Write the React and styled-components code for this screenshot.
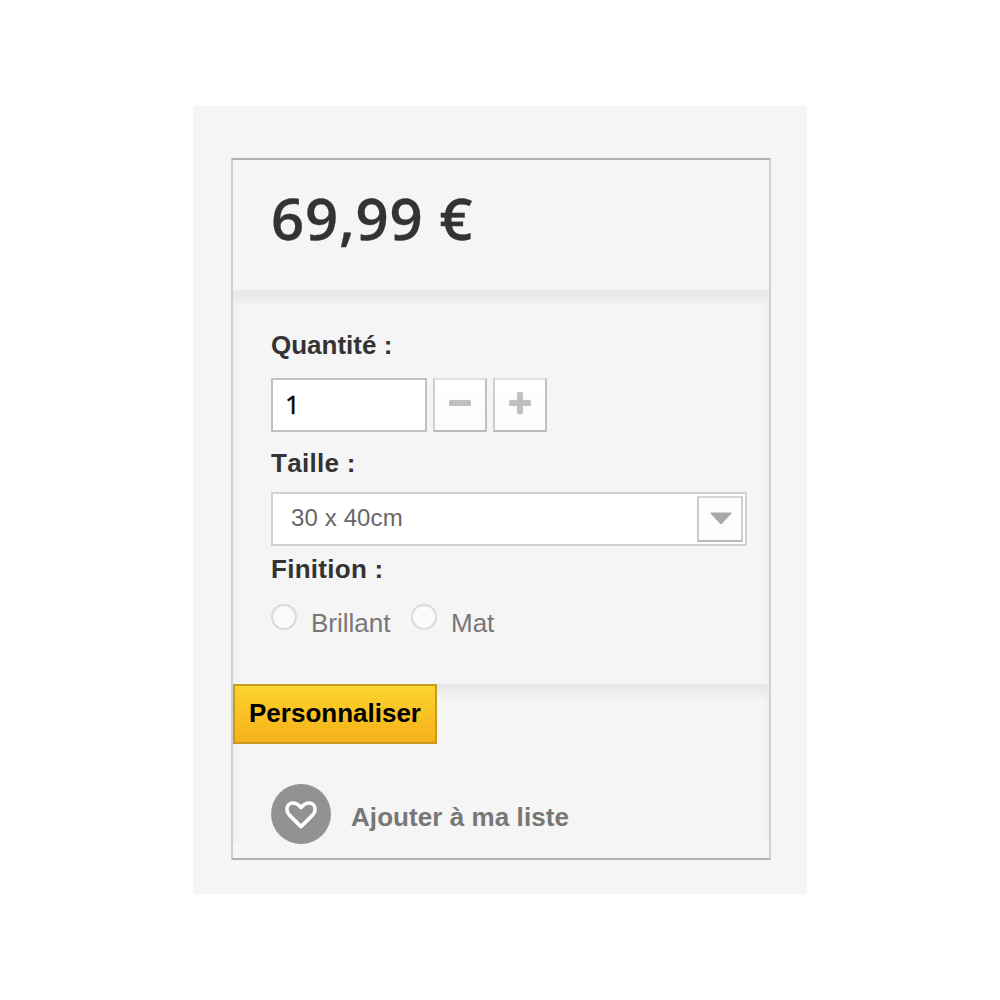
import React, { useState } from 'react'
import styled, { createGlobalStyle } from 'styled-components'

function App() {

    const [quantity, setQuantity] = useState(1);
    const [finish, setFinish] = useState('');

    return (
        <>
            <GlobalStyle />
            <Page>
                <Card>
                    <PriceBox>69,99 €</PriceBox>
                    <Options>
                        <Label>Quantité :</Label>
                        <QuantityRow>
                            <QuantityInput
                                type="text"
                                value={quantity}
                                onChange={(e) => setQuantity(Number(e.target.value) || 1)}
                            />
                            <StepButton aria-label="Moins" onClick={() => setQuantity(Math.max(1, quantity - 1))}>
                                <svg width="24" height="24" viewBox="0 0 24 24">
                                    <rect x="1" y="9" width="22" height="6" rx="1.5" fill="#c0c0c0" />
                                </svg>
                            </StepButton>
                            <StepButton aria-label="Plus" onClick={() => setQuantity(quantity + 1)}>
                                <svg width="24" height="24" viewBox="0 0 24 24">
                                    <rect x="1" y="9" width="22" height="6" rx="1.5" fill="#c0c0c0" />
                                    <rect x="9" y="1" width="6" height="22" rx="1.5" fill="#c0c0c0" />
                                </svg>
                            </StepButton>
                        </QuantityRow>
                        <Label $spacing="0.3px">Taille :</Label>
                        <Select>
                            <span>30 x 40cm</span>
                            <Arrow>
                                <svg width="22" height="13" viewBox="0 0 22 13">
                                    <path d="M1 .5h20q1 .3.3 1.2L12 11.8q-1 .9-2 0L.7 1.7Q0 .8 1 .5z" fill="#a9a9a9" />
                                </svg>
                            </Arrow>
                        </Select>
                        <Label $spacing="0.28px">Finition :</Label>
                        <RadioRow>
                            {['Brillant', 'Mat'].map((name) => (
                                <RadioLabel key={name} onClick={() => setFinish(name)}>
                                    <Radio $checked={finish === name} />
                                    <span>{name}</span>
                                </RadioLabel>
                            ))}
                        </RadioRow>
                    </Options>
                    <Actions>
                        <CustomizeButton>Personnaliser</CustomizeButton>
                        <Wishlist>
                            <HeartCircle>
                                <svg width="34" height="30" viewBox="0 0 34 30">
                                    <path
                                        d="M17 27.600 5.400 16.100C3.400 14 2.900 12.500 2.900 10.300 2.900 6.300 5.400 4 9 4c3.300 0 5.600 1.800 8 4.500C19.400 5.800 21.700 4 25 4c3.600 0 6.100 2.300 6.100 6.300 0 2.200-.5 3.700-2.500 5.800z"
                                        fill="none"
                                        stroke="#fff"
                                        strokeWidth="3.6"
                                        strokeLinejoin="round"
                                    />
                                </svg>
                            </HeartCircle>
                            <span>Ajouter à ma liste</span>
                        </Wishlist>
                    </Actions>
                </Card>
            </Page>
        </>
    )
}

const GlobalStyle = createGlobalStyle`
    * {
        box-sizing: border-box;
    }

    body {
        margin: 0;
        background: #fff;
        font-family: "Liberation Sans", Arial, sans-serif;
    }
`;

const Page = styled.div`
    width: 614px;
    height: 788px;
    margin: 106px auto 0;
    padding: 52px 36px 34px 38px;
    background: #f5f5f5;
`;

const Card = styled.div`
    width: 540px;
    height: 702px;
    border: 2px solid;
    border-color: #b0b0b0 #d0d0d0;
`;

const PriceBox = styled.div`
    height: 130px;
    padding: 18px 0 0 38px;
    font: 600 58px/80px "Open Sans", sans-serif;
    letter-spacing: 0.8px;
    color: #333;
    -webkit-text-stroke: 0.3px #333;
`;

const Options = styled.div`
    height: 394px;
    padding: 38px 22px 0 38px;
    box-shadow: inset 0 10px 10px rgba(0, 0, 0, 0.05);
`;

const Label = styled.div`
    height: 34px;
    font-size: 26px;
    font-weight: bold;
    line-height: 34px;
    font-kerning: none;
    letter-spacing: ${(props) => props.$spacing || 'normal'};
    color: #333;
`;

const QuantityRow = styled.div`
    display: flex;
    gap: 6px;
    margin: 16px 0 14px;
`;

const QuantityInput = styled.input`
    width: 156px;
    height: 54px;
    padding: 0 12px 2px;
    border: 2px solid #bdc2c4;
    border-radius: 0;
    background: #fff;
    font: 26px "Open Sans", sans-serif;
    color: #000;
    -webkit-text-stroke: 0.4px #000;
`;

const StepButton = styled.button`
    display: flex;
    justify-content: center;
    width: 54px;
    height: 54px;
    padding: 11px 0 0;
    border: 2px solid;
    border-color: #dedede #c1c1c1 #b9bbbb #cfcfcf;
    background: linear-gradient(#fff, #fbfbfb);
`;

const Select = styled.div`
    display: flex;
    justify-content: space-between;
    width: 476px;
    height: 54px;
    margin: 12px 0 6px;
    padding: 2px 2px 0 18px;
    border: 2px solid #d2d2d2;
    background: #fff;
    font-size: 24px;
    line-height: 44px;
    letter-spacing: 0.12px;
    color: #686666;
`;

const Arrow = styled.div`
    display: flex;
    justify-content: center;
    width: 46px;
    height: 46px;
    padding: 14px 0 0 2px;
    border: 2px solid;
    border-color: #d6d6d6 #d0d0d0 #b8b8b8 #cacaca;
    background: #fdfdfd;
`;

const RadioRow = styled.div`
    display: flex;
    gap: 20.500px;
    margin-top: 18px;
`;

const RadioLabel = styled.label`
    display: flex;
    gap: 14px;
    font-size: 26px;
    line-height: 38px;
    color: #777;
`;

const Radio = styled.span`
    width: 26px;
    height: 26px;
    border: 2px solid #dadada;
    border-radius: 50%;
    background: ${(props) => (props.$checked ? 'radial-gradient(#777 35%, #fafafa 40%)' : '#fafafa')};
`;

const Actions = styled.div`
    height: 160px;
    box-shadow: inset 0 10px 10px rgba(0, 0, 0, 0.05);
`;

const CustomizeButton = styled.button`
    display: block;
    width: 204px;
    height: 60px;
    padding: 0 0 2px;
    border: 2px solid #c69b20;
    background: linear-gradient(#fdd42d, #f4b11a);
    font: bold 26px/54px "Liberation Sans", Arial, sans-serif;
    color: #000;
`;

const Wishlist = styled.div`
    display: flex;
    gap: 20px;
    margin: 40px 0 0 38px;
    font-size: 26px;
    font-weight: bold;
    line-height: 66px;
    letter-spacing: 0.07px;
    color: #777;
`;

const HeartCircle = styled.div`
    display: flex;
    align-items: center;
    justify-content: center;
    width: 60px;
    height: 60px;
    border-radius: 50%;
    background: #929292;
`;

export default App
